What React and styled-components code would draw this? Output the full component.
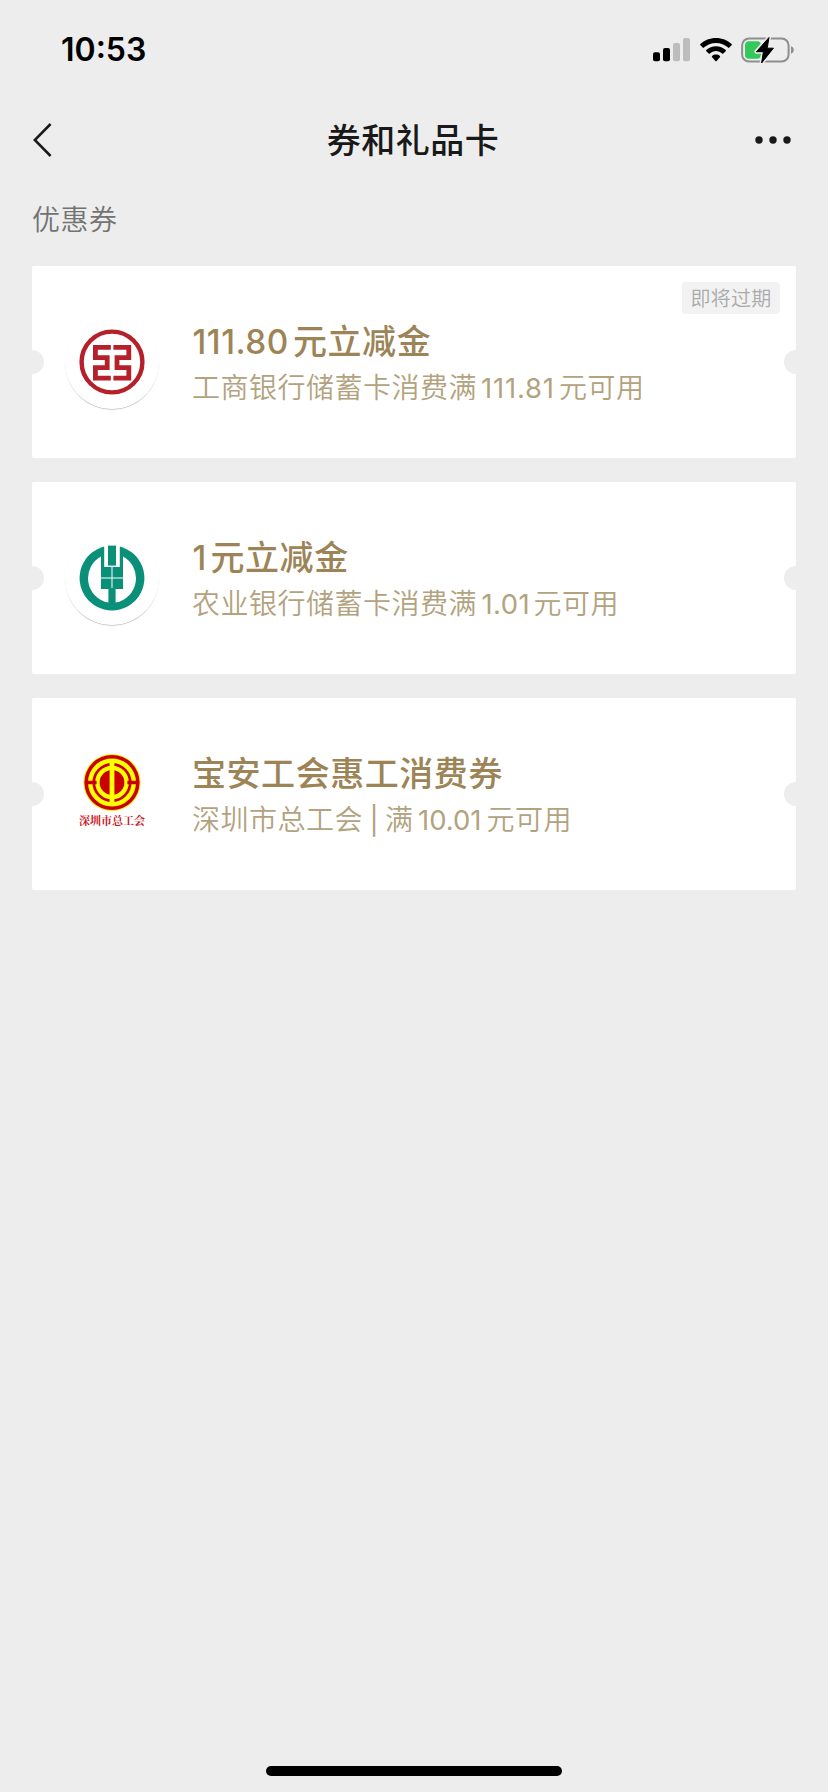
import React from "react";
import styled, { createGlobalStyle } from "styled-components";

const coupons = [
  {
    id: "icbc",
    logo: <IcbcLogo />,
    tag: "即将过期",
    title: [{ num: "111.80", width: 101, left: 0.5, spacing: 0.5 }, "元立减金"],
    desc: ["工商银行储蓄卡消费满", { num: "111.81", width: 82, left: 4, spacing: 0.8 }, "元可用"],
  },
  {
    id: "abc",
    logo: <AbcLogo />,
    title: [{ num: "1", width: 18.5, left: 0.5 }, "元立减金"],
    desc: ["农业银行储蓄卡消费满", { num: "1.01", width: 56.5, left: 4.5, spacing: 0.4 }, "元可用"],
  },
  {
    id: "union",
    logo: <UnionLogo />,
    plain: true,
    title: ["宝安工会惠工消费券"],
    desc: [
      "深圳市总工会",
      { num: "|", width: 22, left: 6.5 },
      "满",
      { num: "10.01", width: 73, left: 4.5 },
      "元可用",
    ],
  },
];

function IcbcLogo() {
  return (
    <svg width="66" height="66" viewBox="0 0 66 66" fill="none" stroke="#b5202a">
      <circle cx="33" cy="33" r="30.4" strokeWidth="4.4" />
      <g strokeWidth="4.8">
        <path d="M31.8 18.4H16.4V28.6H28.2V38.6H16.4V49.2H31.8" />
        <path d="M34.4 18.4H49.8V28.6H38V38.6H49.8V49.2H34.4" />
      </g>
    </svg>
  );
}

function AbcLogo() {
  return (
    <svg width="66" height="66" viewBox="0 0 66 66" fill="#0a8f78">
      <path d="M25.2 1.6A32.4 32.4 0 1 0 40.8 1.6V10.2L43.6 11.2A24.8 24.8 0 0 1 36.6 57.6V44H44V11.2L40.8 10.2V22H25.2V10.2L22 11.2V44H29.4V57.6A24.8 24.8 0 0 1 22.4 11.2L25.2 10.2Z" />
      <rect x="29" y="0.6" width="8" height="20" />
      <path d="M33 21V43M22 33H44" stroke="#fff" strokeWidth="1" />
    </svg>
  );
}

function UnionLogo() {
  return (
    <svg width="66" height="76" viewBox="0 0 66 76">
      <circle cx="33" cy="28.5" r="28.5" fill="#ffee00" />
      <circle cx="33" cy="28.5" r="27.6" fill="#c80000" />
      <g fill="none" stroke="#ff0" strokeWidth="4.4">
        <circle cx="33" cy="28.5" r="21.8" />
        <circle cx="33" cy="28.5" r="14.6" />
      </g>
      <path d="M6 28.5H17.6M48.4 28.5H60" stroke="#c80000" strokeWidth="3.4" />
      <path d="M33 7V50" stroke="#ff0" strokeWidth="4.8" />
      <text
        x="33"
        y="71"
        textAnchor="middle"
        fontFamily="'Noto Serif CJK SC', 'Noto Sans CJK SC', serif"
        fontSize="11"
        fontWeight="700"
        fill="#c8161d"
      >
        深圳市总工会
      </text>
    </svg>
  );
}

function Line({ parts }) {
  return parts.map((part, i) =>
    typeof part === "string" ? (
      <span key={i}>{part}</span>
    ) : (
      <Num key={i} $width={part.width} $left={part.left} $spacing={part.spacing}>
        {part.num}
      </Num>
    )
  );
}

function StatusBar() {
  return (
    <Status>
      <Time>10:53</Time>
      <StatusIcons>
        <svg width="38" height="24" viewBox="0 0 38 24">
          <rect x="0" y="14.2" width="7" height="9" rx="2" />
          <rect x="10" y="10" width="7" height="13.2" rx="2" />
          <rect x="20" y="5" width="7" height="18.2" rx="2" fill="#bdbdbd" />
          <rect x="30" y="0" width="7" height="23.2" rx="2" fill="#bdbdbd" />
        </svg>
        <svg width="32" height="24" viewBox="0 0 32 24">
          <path d="M16 0C9.9 0 4.4 2.3.4 6.1c-.4.4-.4.8 0 1.2l2.3 2.3c.3.4.8.4 1.2 0C7.1 6.6 11.3 4.9 16 4.9s8.9 1.7 12.1 4.7c.4.4.9.4 1.2 0l2.3-2.3c.4-.4.4-.8 0-1.2C27.6 2.3 22.1 0 16 0Z" />
          <path d="M16 8.3c-3.7 0-7.1 1.4-9.7 3.7-.4.3-.4.8 0 1.2l2.4 2.3c.3.3.8.3 1.2 0 1.6-1.5 3.8-2.4 6.1-2.4s4.5.9 6.1 2.4c.4.3.9.3 1.2 0l2.4-2.3c.4-.4.4-.9 0-1.2-2.6-2.3-6-3.7-9.7-3.7Z" />
          <path d="M16 16.6c-1.5 0-2.8.5-3.9 1.4-.4.3-.4.8 0 1.2l3.3 3.7c.4.3.8.3 1.2 0l3.3-3.7c.4-.4.4-.9 0-1.2-1.1-.9-2.4-1.4-3.9-1.4Z" />
        </svg>
        <svg width="54" height="28" viewBox="0 0 54 28">
          <rect x="1.1" y="2.4" width="46.5" height="23.2" rx="7" fill="none" stroke="#8e8e90" strokeWidth="2" />
          <path d="M50 10.3c1.8.6 2.8 2 2.8 3.7s-1 3.1-2.8 3.7Z" fill="#8e8e90" />
          <rect x="4" y="5.3" width="16" height="17.4" rx="4" fill="#34c759" />
          <path
            d="M28 1.5 15.4 15.7h7L20.6 27 32.4 12.2h-6.2Z"
            stroke="#ededed"
            strokeWidth="4"
            strokeLinejoin="round"
          />
          <path d="M28 1.5 15.4 15.7h7L20.6 27 32.4 12.2h-6.2Z" stroke="#000" strokeLinejoin="round" />
        </svg>
      </StatusIcons>
    </Status>
  );
}

function App() {
  return (
    <Page>
      <GlobalStyle />
      <StatusBar />
      <NavBar>
        <svg width="19" height="34" viewBox="0 0 19 34" fill="none" stroke="#191919" strokeWidth="2.5">
          <path d="M17.6 1 1.8 17 17.6 33" />
        </svg>
        <h1>券和礼品卡</h1>
        <svg width="36" height="8" viewBox="0 0 36 8" fill="#191919">
          <circle cx="4" cy="4" r="3.7" />
          <circle cx="18" cy="4" r="3.7" />
          <circle cx="32" cy="4" r="3.7" />
        </svg>
      </NavBar>
      <SectionTitle>优惠券</SectionTitle>
      <CouponList>
        {coupons.map((coupon) => (
          <Coupon key={coupon.id}>
            <Logo $plain={coupon.plain}>{coupon.logo}</Logo>
            <Info>
              <Title>
                <Line parts={coupon.title} />
              </Title>
              <Desc>
                <Line parts={coupon.desc} />
              </Desc>
            </Info>
            {coupon.tag && <Tag>{coupon.tag}</Tag>}
          </Coupon>
        ))}
      </CouponList>
      <HomeIndicator />
    </Page>
  );
}

export default App;

const GlobalStyle = createGlobalStyle`
  * {
    box-sizing: border-box;
    margin: 0;
    padding: 0;
  }
  body {
    background: #ededed;
    font-family: Inter, "Noto Sans CJK SC", sans-serif;
  }
  svg {
    display: block;
    flex-shrink: 0;
  }
`;

const Page = styled.div`
  display: flex;
  flex-direction: column;
  height: 1792px;
  background: #ededed;
`;

const Status = styled.div`
  display: flex;
  align-items: center;
  justify-content: space-between;
  height: 96px;
  padding: 4px 33px 0 61px;
`;

const Time = styled.span`
  font-size: 32px;
  font-weight: 600;
  line-height: 40px;
`;

const StatusIcons = styled.div`
  display: flex;
  align-items: center;
  gap: 9px;
`;

const NavBar = styled.div`
  display: grid;
  grid-template-columns: 1fr auto 1fr;
  align-items: center;
  height: 88px;
  padding: 0 37px 0 33px;

  h1 {
    padding: 2px 0 0 2px;
    font-size: 34px;
    font-weight: 500;
    line-height: 48px;
    letter-spacing: 0.5px;
    color: #191919;
  }
  svg:last-child {
    justify-self: end;
  }
`;

const SectionTitle = styled.h2`
  height: 82px;
  padding: 16px 32px 0;
  font-size: 28px;
  font-weight: 350;
  line-height: 40px;
  letter-spacing: 0.5px;
  color: #737373;
`;

const CouponList = styled.div`
  display: flex;
  flex-direction: column;
  flex: 1;
  gap: 24px;
  padding: 0 32px;
`;

const Coupon = styled.div`
  position: relative;
  display: flex;
  align-items: center;
  height: 192px;
  padding-left: 33px;
  border-radius: 2px;
  background: #fff;

  /* ticket notches */
  &::before,
  &::after {
    content: "";
    position: absolute;
    top: 84px;
    width: 24px;
    height: 24px;
    border-radius: 50%;
    background: #ededed;
  }
  &::before {
    left: -12px;
  }
  &::after {
    right: -12px;
  }
`;

const Logo = styled.div`
  display: flex;
  align-items: center;
  justify-content: center;
  width: 94px;
  height: 94px;
  padding-bottom: ${(props) => (props.$plain ? "4px" : "0")};
  border-radius: 50%;
  box-shadow: ${(props) => (props.$plain ? "none" : "0 1px 1px -0.5px rgba(0, 0, 0, 0.35)")};
`;

const Info = styled.div`
  margin-left: 33px;
  padding-top: 4px;
  white-space: nowrap;
`;

const Title = styled.h3`
  font-size: 34px;
  font-weight: 500;
  line-height: 48px;
  letter-spacing: 0.55px;
  color: #9c8456;
`;

const Desc = styled.p`
  font-size: 28px;
  font-weight: 350;
  line-height: 44px;
  letter-spacing: 0.5px;
  color: #b3a27e;
`;

const Num = styled.span`
  display: inline-block;
  width: ${(props) => props.$width}px;
  padding-left: ${(props) => props.$left || 0}px;
  font-size: 0.98em;
  letter-spacing: ${(props) => props.$spacing || 0}px;

  ${Desc} & {
    font-weight: 400;
  }
`;

const Tag = styled.span`
  position: absolute;
  top: 16px;
  right: 16px;
  width: 98px;
  height: 32px;
  border-radius: 4px;
  background: #f2f2f2;
  font-size: 20px;
  font-weight: 350;
  line-height: 34px;
  letter-spacing: 0.3px;
  text-align: center;
  color: #aaa;
`;

const HomeIndicator = styled.div`
  align-self: center;
  width: 296px;
  height: 10px;
  margin-bottom: 16px;
  border-radius: 5px;
  background: #000;
`;
